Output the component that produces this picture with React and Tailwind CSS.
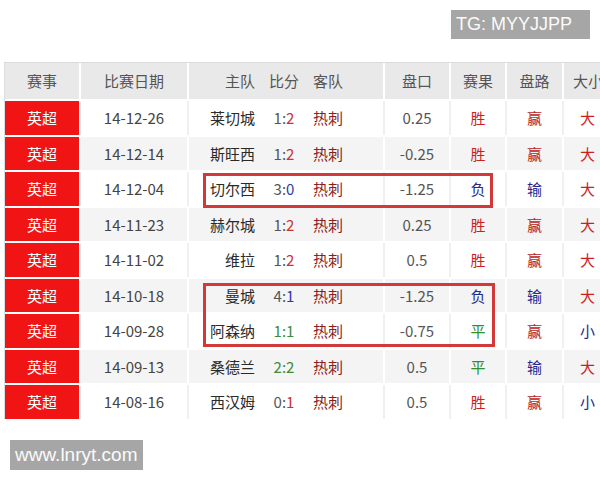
import React from "react";

const rows = [
  { d: "14-12-26", h: "莱切城", s: ["1:", "2"], sc: "r", p: "0.25", r: "胜", l: "赢", b: "大" },
  { d: "14-12-14", h: "斯旺西", s: ["1:", "2"], sc: "r", p: "-0.25", r: "胜", l: "赢", b: "大" },
  { d: "14-12-04", h: "切尔西", s: ["3:", "0"], sc: "b", p: "-1.25", r: "负", l: "输", b: "大" },
  { d: "14-11-23", h: "赫尔城", s: ["1:", "2"], sc: "r", p: "0.25", r: "胜", l: "赢", b: "大" },
  { d: "14-11-02", h: "维拉", s: ["1:", "2"], sc: "r", p: "0.5", r: "胜", l: "赢", b: "大" },
  { d: "14-10-18", h: "曼城", s: ["4:", "1"], sc: "b", p: "-1.25", r: "负", l: "输", b: "大" },
  { d: "14-09-28", h: "阿森纳", s: ["1:", "1"], sc: "g", p: "-0.75", r: "平", l: "赢", b: "小" },
  { d: "14-09-13", h: "桑德兰", s: ["2:", "2"], sc: "g", p: "0.5", r: "平", l: "输", b: "大" },
  { d: "14-08-16", h: "西汉姆", s: ["0:", "1"], sc: "r", p: "0.5", r: "胜", l: "赢", b: "小" },
];

const colorOf = (t) => {
  if (t === "胜" || t === "大") return "text-[#cc1f1f]";
  if (t === "赢") return "text-[#b81c1c]";
  if (t === "平") return "text-[#2f8f2f]";
  return "text-[#1f2a8c]";
};

function Score({ s, sc }) {
  if (sc === "g") {
    return <span className="text-[#3d8b3d]">{s[0]}{s[1]}</span>;
  }
  return (
    <span>
      <span className="text-[#555]">{s[0]}</span>
      <span className={sc === "r" ? "text-[#c93333]" : "text-[#2b3aa6]"}>{s[1]}</span>
    </span>
  );
}

export default function App() {
  const cols = "grid grid-cols-[74px_106px_194px_64px_54px_55px_48px] gap-x-[2px]";
  return (
    <div
      className="w-[600px] h-[480px] overflow-hidden bg-white relative"
      style={{ fontFamily: '"Noto Sans CJK SC", "Noto Sans", sans-serif' }}
    >
      <div className="flex justify-end pt-[10px] pr-[10px]">
        <div
          className="h-[29px] w-[139px] bg-[#a6a6a6] text-[#fafafa] text-[18px] leading-[29px] pl-[5px]"
          style={{ fontFamily: '"Liberation Sans", Arial, sans-serif' }}
        >
          TG: MYYJJPP
        </div>
      </div>

      <div className="relative mt-[23px] ml-[4px] w-[620px] border-t border-l border-[#dcdcdc]">
        <div className={`${cols} h-[36px] bg-white text-[15px] text-[#555] leading-[36px]`}>
          <div className="bg-[#e9e9e9] text-center">赛事</div>
          <div className="bg-[#e9e9e9] text-center">比赛日期</div>
          <div className="bg-[#e9e9e9] flex">
            <div className="w-[66px] text-right">主队</div>
            <div className="w-[58px] text-center">比分</div>
            <div className="flex-1">客队</div>
          </div>
          <div className="bg-[#e9e9e9] text-center">盘口</div>
          <div className="bg-[#e9e9e9] text-center">赛果</div>
          <div className="bg-[#e9e9e9] text-center">盘路</div>
          <div className="bg-[#e9e9e9] pl-[9px] whitespace-nowrap">大小</div>
        </div>

        <div className="mt-[2px] flex flex-col gap-y-[2px]">
          {rows.map((r, i) => {
            const gray = i % 2 === 1;
            const cell = gray ? "bg-[#f4f4f4]" : "bg-white";
            return (
              <div
                key={r.d}
                className={`${cols} h-[33.5px] text-[15px] leading-[33.5px] ${gray ? "bg-white" : "bg-[#f0f0f0]"}`}
              >
                <div className="bg-[#f01414] text-white text-center">英超</div>
                <div className={`${cell} text-center text-[#444]`}>{r.d}</div>
                <div className={`${cell} flex`}>
                  <div className="w-[66px] text-right text-[#2a2a2a]">{r.h}</div>
                  <div className="w-[58px] text-center">
                    <Score s={r.s} sc={r.sc} />
                  </div>
                  <div className="flex-1 text-[#8b1d1d]">热刺</div>
                </div>
                <div className={`${cell} text-center text-[#555]`}>{r.p}</div>
                <div className={`${cell} text-center ${colorOf(r.r)}`}>{r.r}</div>
                <div className={`${cell} text-center ${colorOf(r.l)}`}>{r.l}</div>
                <div className={`${cell} pl-[16px] ${colorOf(r.b)}`}>{r.b}</div>
              </div>
            );
          })}
        </div>

        <div className="absolute left-[198px] top-[110px] w-[290px] h-[35px] border-[3px] border-[#d23a3a]" />
        <div className="absolute left-[198px] top-[220px] w-[292px] h-[64px] border-[3px] border-[#d23a3a]" />
      </div>

      <div
        className="mt-[21px] ml-[10px] h-[30px] w-[133px] bg-[#a6a6a6] text-[#fafafa] text-[19px] leading-[30px] pl-[5px]"
        style={{ fontFamily: '"Liberation Sans", Arial, sans-serif' }}
      >
        www.lnryt.com
      </div>
    </div>
  );
}
